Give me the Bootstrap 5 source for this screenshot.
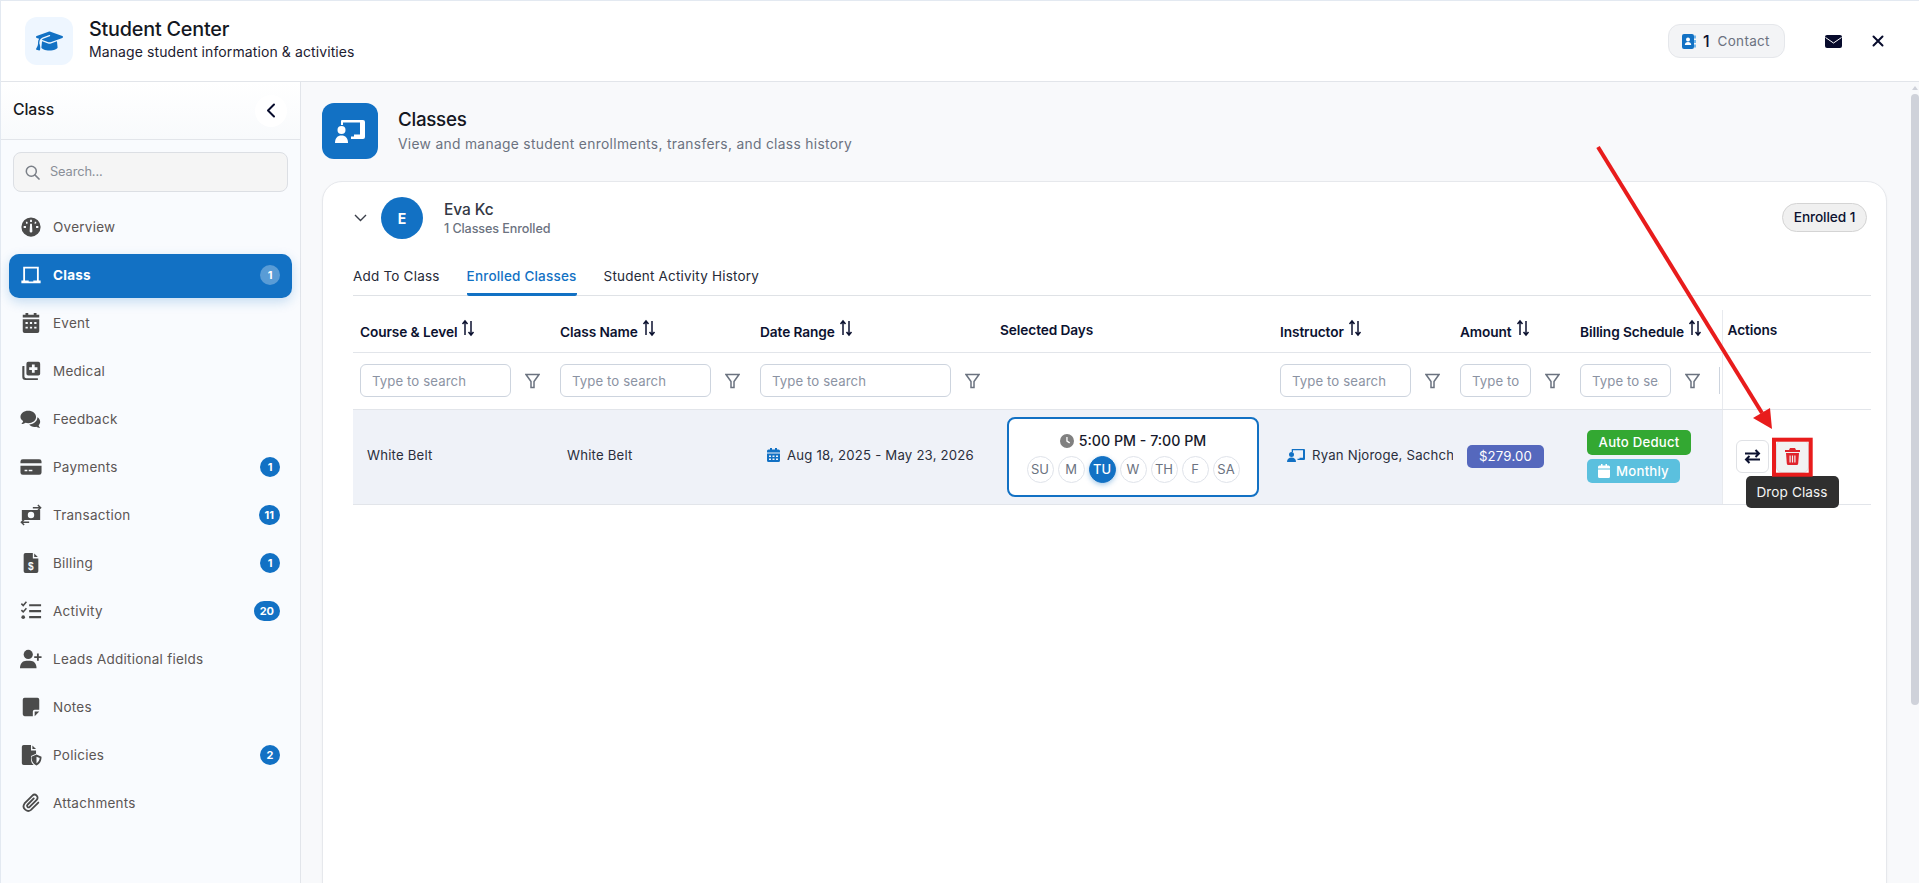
<!DOCTYPE html>
<html lang="en">
<head>
<meta charset="UTF-8">
<meta name="viewport" content="width=device-width, initial-scale=1.0">
<title>Student Center</title>
<link href="https://cdn.jsdelivr.net/npm/bootstrap@5.3.0/dist/css/bootstrap.min.css" rel="stylesheet">
<style>
:root { --brand: #1271c4; --ink: #0c1230; --line: #e2e5ea; }
html, body { height: 100%; }
body { font-family: Inter, "Noto Sans", sans-serif; color: var(--ink); overflow: hidden; background: #fff; letter-spacing: -.1px; }
.app-shell { height: 883px; border-top: 1px solid #e3e9f1; border-left: 1px solid #e3e9f1; position: relative; }
.top-bar { height: 81px; padding: 0 35px 0 24px; border-bottom: 1px solid var(--line); flex: none; }
.logo-box { width: 48px; height: 48px; border-radius: 12px; background: #eef6ff; }
.logo-box svg { width: 27px; height: 22px; fill: var(--brand); }
.title-block { margin-bottom: 4px; }
.app-title { font-size: 19.8px; font-weight: 500; line-height: 26px; color: #14171f; letter-spacing: -.2px; }
.app-sub { font-size: 14px; line-height: 20px; color: #1c2030; letter-spacing: .1px; }
.contact-pill { width: 117px; height: 34px; background: #f3f4f6; border: 1px solid #e5e7eb; border-radius: 12px; padding-left: 13px; margin-right: 40px; }
.contact-pill b { font-size: 16px; font-weight: 500; margin: 0 8px 0 7px; }
.contact-pill span { font-size: 13.5px; color: #6b7280; letter-spacing: .3px; }
.top-mail { width: 17px; height: 13px; margin-right: 30px; }
.top-close { width: 12px; height: 12px; }
.body-row { height: 801px; }
.side-bar { width: 300px; flex: none; background: #f9fbfe; border-right: 1px solid var(--line); }
.side-head { height: 58px; padding: 0 13px 0 12px; border-bottom: 1px solid var(--line); background: linear-gradient(#fff, #f8fafc); }
.side-head h2 { font-size: 15.8px; font-weight: 500; margin: 0; color: #171a22; }
.side-back { width: 32px; height: 32px; border-radius: 50%; background: #fff; }
.side-search { margin: 12px 12px 14px 12px; height: 40px; background: #f5f5f5; border: 1px solid #dcdfe4; border-radius: 8px; padding-left: 11px; gap: 10px; }
.side-search span { font-size: 12.8px; color: #8a8f98; }
.side-nav { padding: 0 8px; gap: 4px; }
.side-link { height: 44px; border-radius: 10px; padding: 0 12px 2px 0; color: #5c5655; font-size: 13.5px; letter-spacing: .25px; text-decoration: none; }
.side-link .ico { width: 44px; flex: none; text-align: center; }
.side-link svg { width: 26px; height: 22px; fill: #4b4b4b; vertical-align: middle; }
.side-link.on { background: var(--brand); color: #fff; font-weight: 700; box-shadow: 0 4px 12px rgba(18,113,196,.22); }
.side-link.on svg { fill: #fff; }
.count-dot { min-width: 20px; height: 20px; padding: 0 6px; border-radius: 10px; background: var(--brand); color: #fff; font-size: 11px; font-weight: 700; line-height: 20px; text-align: center; letter-spacing: 0; }
.on .count-dot { background: rgba(255,255,255,.3); }
.main-pane { background: #f8f9fb; min-width: 0; padding: 21px 24px 0 21px; overflow: hidden; }
.page-head { height: 56px; margin-bottom: 22px; gap: 20px; flex: none; }
.head-ico { width: 56px; height: 56px; background: var(--brand); border-radius: 12px; }
.head-ico svg { width: 32px; height: 26px; fill: #fff; }
.page-title { font-size: 18.8px; font-weight: 500; line-height: 26px; letter-spacing: -.3px; margin: 0; color: #14171f; }
.page-sub { font-size: 13.8px; color: #6b7280; line-height: 22px; letter-spacing: .32px; }
.class-card { border: 1px solid #e6e8ec; border-radius: 20px; background: #fff; padding: 15px 15px 0 30px; height: 760px; flex: none; box-shadow: 0 1px 3px rgba(0,0,0,.04); }
.person-row { height: 42px; margin-bottom: 20px; }
.person-chev { width: 13px; height: 8px; margin: 0 14px 0 1px; }
.person-avatar { width: 42px; height: 42px; border-radius: 50%; background: var(--brand); color: #fff; font-size: 14px; font-weight: 700; margin-right: 21px; }
.person-name { font-size: 15.5px; font-weight: 500; line-height: 22px; color: #333845; }
.person-sub { font-size: 12.6px; font-weight: 500; line-height: 16px; color: #6b7280; letter-spacing: -.1px; }
.enrolled-pill { width: 85px; height: 29px; background: #f0f0f0; border: 1px solid #d4d4d4; border-radius: 15px; font-size: 13.7px; font-weight: 500; margin: -2px 4px 0 0; }
.tab-row { border-bottom: 1px solid #dfe2e6; height: 37px; gap: 27px; }
.tab-link { font-size: 13.5px; height: 37px; line-height: 34px; color: #262a38; text-decoration: none; letter-spacing: .2px; }
.tab-link.on { color: var(--brand); font-weight: 500; border-bottom: 3px solid var(--brand); border-radius: 0 0 2px 2px; }
.class-table { table-layout: fixed; width: 1518px; margin: 14px 0 0; }
.class-table th, .class-table td { border-bottom: 1px solid var(--line); padding: 0 7px; vertical-align: middle; white-space: nowrap; overflow: hidden; }
.class-table thead tr:first-child th { height: 42px; font-size: 13.7px; font-weight: 600; color: var(--ink); }
.class-table thead tr:nth-child(2) th { height: 57px; font-weight: 400; }
.class-table tbody td { height: 95px; padding: 0 14px 1px; font-size: 13.2px; color: #2a2e3c; background: #eff2f8; letter-spacing: .2px; }
.class-table tbody td.days-cell { padding: 0 14px; }
.c1, .c2 { width: 200px; } .c3 { width: 240px; } .c4 { width: 280px; } .c5 { width: 180px; } .c6 { width: 120px; } .c7 { width: 149px; } .c8 { width: 149px; }
.class-table .act-cell { background: #fff; border-left: 1px solid #e8eaee; overflow: visible; padding-left: 5px; }
.class-table tbody .act-cell { padding-left: 13px; position: relative; }
.sort-ico { width: 16px; height: 18px; margin-left: 3px; vertical-align: 0; stroke: var(--ink); stroke-width: 1.5; fill: none; }
.filter-wrap { gap: 14px; }
.filter-box { height: 33px; min-height: 33px; border: 1px solid #cdd4de; border-radius: 6px; padding: 0 11px; font-size: 13.2px; color: #2a2e3c; background: #fff; letter-spacing: .1px; flex: none; }
.filter-box::placeholder { color: #8b93a3; opacity: 1; }
.w150 { width: 151px; } .w190 { width: 191px; } .w131 { width: 131px; } .w71 { width: 71px; } .w91 { width: 91px; }
.filter-ico { width: 15px; height: 16px; stroke: #6b7380; fill: none; stroke-width: 1.5; flex: none; }
.clip-edge { width: 2px; height: 27px; border-left: 1px solid #cdd4de; flex: none; margin-left: 5px; }
.date-ico { width: 13px; height: 14px; fill: var(--brand); margin: 0 7px 0 0; vertical-align: -2px; }
.days-box { width: 252px; height: 80px; background: #fff; border: 2px solid var(--brand); border-radius: 8px; }
.days-time { font-size: 14.2px; font-weight: 500; color: #171a2c; line-height: 20px; margin-bottom: 5px; letter-spacing: 0; }
.days-time svg { width: 14px; height: 14px; fill: #808080; margin-right: 5px; vertical-align: -2px; }
.day-dot { width: 27px; height: 27px; border: 1px solid #dfe3ea; border-radius: 50%; font-size: 13px; color: #6b7280; line-height: 25px; text-align: center; letter-spacing: 0; }
.day-dot.on { background: var(--brand); border-color: var(--brand); color: #fff; font-weight: 500; box-shadow: 0 2px 5px rgba(18,113,196,.35); }
.teach-ico { width: 18px; height: 14px; fill: var(--brand); margin-right: 7px; vertical-align: -2px; }
.amount-pill { display: inline-block; background: #5568bd; color: #fff; border-radius: 5px; font-size: 13.2px; font-weight: 400; width: 77px; height: 23px; line-height: 23px; text-align: center; }
.bill-pill { display: block; border-radius: 5px; color: #fff; font-size: 13.2px; font-weight: 500; height: 25px; line-height: 25px; text-align: center; }
.bill-auto { background: #33a832; width: 104px; margin-bottom: 4px; }
.bill-month { background: #5bc0de; width: 93px; height: 24px; line-height: 24px; }
.bill-month svg { width: 12px; height: 14px; fill: #fff; margin-right: 6px; vertical-align: -2px; }
.act-btn { width: 33px; height: 33px; border: 1px solid #dfe1e5; border-radius: 6px; background: #fff; padding: 0; }
.act-btn svg { width: 17px; height: 17px; }
.act-drop { background: #f2f2f2; margin-left: 7px; }
.drop-tip { position: absolute; left: 23px; top: 66px; width: 93px; height: 32px; background: #2f2f2f; color: #f4f4f4; font-size: 13.6px; line-height: 32px; text-align: center; border-radius: 5px; z-index: 3; letter-spacing: .1px; }
.scroll-rail { width: 8px; flex: none; background: #f8f9fb; position: relative; }
.scroll-rail i { position: absolute; left: 0; right: 0; top: 12px; height: 611px; background: #cfd2da; border-radius: 4px; }
.scroll-rail u { position: absolute; left: 1px; top: 4px; border: 3px solid transparent; border-bottom: 4px solid #cfd2da; border-top: 0; }
.note-layer { position: absolute; left: -1px; top: -1px; width: 1919px; height: 883px; pointer-events: none; z-index: 5; }
</style>
</head>
<body>
<div class="app-shell d-flex flex-column">
  <header class="top-bar d-flex align-items-center">
    <div class="logo-box d-flex align-items-center justify-content-center">
      <svg viewBox="0 0 640 512"><path d="M320 32c-8.100 0-16.100 1.400-23.700 4.100L15.800 137.400C6.300 140.900 0 149.900 0 160s6.300 19.100 15.800 22.600l57.900 20.900C57.300 229.300 48 259.800 48 291.900v28.100c0 28.400-10.800 57.700-22.300 80.800c-6.500 13-13.900 25.800-22.500 37.600C0 442.700-.9 448.300 .9 453.400s6 8.900 11.200 10.200l64 16c4.200 1.100 8.700 .3 12.400-2s6.300-6.100 7.100-10.400c8.600-42.800 4.300-81.200-2.100-108.700C90.300 344.300 86 329.800 80 316.500V291.900c0-30.200 10.200-58.700 27.900-81.500c12.900-15.500 29.600-28 49.200-35.700l157-61.700c8.200-3.200 17.500 .8 20.700 9s-.8 17.500-9 20.700l-157 61.700c-12.400 4.900-23.300 12.400-32.200 21.600l159.600 57.600c7.600 2.700 15.600 4.100 23.700 4.100s16.100-1.400 23.700-4.100L624.200 182.600c9.500-3.400 15.800-12.500 15.800-22.600s-6.300-19.100-15.800-22.600L343.700 36.100C336.100 33.400 328.100 32 320 32zM128 408c0 35.300 86 72 192 72s192-36.700 192-72L496.700 262.600 354.500 314c-11.100 4-22.800 6-34.500 6s-23.500-2-34.500-6L143.300 262.600 128 408z"/></svg>
    </div>
    <div class="ms-3 title-block">
      <div class="app-title">Student Center</div>
      <div class="app-sub">Manage student information &amp; activities</div>
    </div>
    <div class="contact-pill d-flex align-items-center ms-auto">
      <svg width="14" height="15" viewBox="0 0 14 15"><rect x="0" y="0" width="12" height="15" rx="2" fill="#1271c4"/><circle cx="6" cy="5.500" r="2" fill="#fff"/><path d="M2.800 11c0-2 1.400-3 3.200-3s3.200 1 3.200 3z" fill="#fff"/><path d="M13 1.500v3M13 6v3M13 10.500v3" stroke="#4aa3e8" stroke-width="1.500"/></svg>
      <b>1</b><span>Contact</span>
    </div>
    <svg class="top-mail" viewBox="0 0 17 13"><rect width="17" height="13" rx="2" fill="#070b2c"/><path d="M.5 2.500 8.500 8l8-5.500" fill="none" stroke="#fff" stroke-width="1"/></svg>
    <svg class="top-close" viewBox="0 0 12 12"><path d="M1.500 1.500l9 9M10.500 1.500l-9 9" stroke="#070b2c" stroke-width="2" stroke-linecap="round"/></svg>
  </header>
  <div class="body-row d-flex">
    <aside class="side-bar d-flex flex-column">
      <div class="side-head d-flex align-items-center justify-content-between">
        <h2>Class</h2>
        <div class="side-back d-flex align-items-center justify-content-center">
          <svg width="10" height="15" viewBox="0 0 10 15"><path d="M8 1.500 2 7.500l6 6" fill="none" stroke="#070b2c" stroke-width="2" stroke-linecap="round" stroke-linejoin="round"/></svg>
        </div>
      </div>
      <div class="side-search d-flex align-items-center">
        <svg width="15" height="15" viewBox="0 0 15 15"><circle cx="6.300" cy="6.300" r="5" fill="none" stroke="#7a7f87" stroke-width="1.500"/><path d="m10 10 4 4" stroke="#7a7f87" stroke-width="1.700" stroke-linecap="round"/></svg>
        <span>Search...</span>
      </div>
      <nav class="side-nav d-flex flex-column">
        <a class="side-link d-flex align-items-center" href="#"><span class="ico"><svg viewBox="0 0 24 24"><path fill-rule="evenodd" d="M12 1.500a10.500 10.500 0 1 0 0 21 10.500 10.500 0 0 0 0-21zM11 4h2v2.500h-2zM6.300 6.300h1.600l.7 1.600-1.700.7zM16.100 6.300h1.600v1.600l-1.700.7zM4 11h2.500v2H4zM17.500 11H20v2h-2.500zM11 8.500h2l.5 8a1.500 1.500 0 0 1-3 0z"/></svg></span>Overview</a>
        <a class="side-link on d-flex align-items-center" href="#"><span class="ico"><svg viewBox="0 0 24 24"><path fill-rule="evenodd" d="M3.500 3h17v15h2v3H1.500v-3h2zM5.500 5v13h4v1h5v-1h4V5z"/></svg></span>Class<span class="count-dot ms-auto">1</span></a>
        <a class="side-link d-flex align-items-center" href="#"><span class="ico"><svg viewBox="0 0 24 24"><path fill-rule="evenodd" d="M6 1h3v2h6V1h3v2h3v3H3V3h3zM3 8h18v13a2 2 0 0 1-2 2H5a2 2 0 0 1-2-2zM6 11v2h2.500v-2zM10.800 11v2h2.400v-2zM15.500 11v2H18v-2zM6 16v2h2.500v-2zM10.800 16v2h2.400v-2zM15.500 16v2H18v-2z"/></svg></span>Event</a>
        <a class="side-link d-flex align-items-center" href="#"><span class="ico"><svg viewBox="0 0 24 24"><path fill-rule="evenodd" d="M9 2h11a2 2 0 0 1 2 2v11a2 2 0 0 1-2 2H9a2 2 0 0 1-2-2V4a2 2 0 0 1 2-2zM13 5v3h-3v3h3v3h3v-3h3V8h-3V5z"/><path d="M3 6.500h1.800V18a2 2 0 0 0 2 2h12.700v1.800H6a3.500 3.500 0 0 1-3.500-3.500V7z"/></svg></span>Medical</a>
        <a class="side-link d-flex align-items-center" href="#"><span class="ico"><svg viewBox="0 0 24 24"><path d="M9 3c4.800 0 8.500 3 8.500 6.800S13.800 16.500 9 16.500c-1 0-2-.1-3-.4-1.200.9-2.800 1.400-4.500 1.400 1-1 1.700-2.100 2-3.300C1.700 13.100.5 11.500.5 9.800.5 6 4.200 3 9 3z"/><path d="M19 10c0 4-3.500 7.500-9 8 1.200 1.700 3.400 2.600 5.800 2.600.7 0 1.400-.1 2-.2 1.100.8 2.500 1.300 4.200 1.300-.8-.9-1.400-1.900-1.700-3 1.100-1 1.700-2.200 1.700-3.700 0-2.200-1.200-4-3-5z"/></svg></span>Feedback</a>
        <a class="side-link d-flex align-items-center" href="#"><span class="ico"><svg viewBox="0 0 24 24"><path fill-rule="evenodd" d="M3 3.500h18a2.500 2.500 0 0 1 2.500 2.500v2H.5V6A2.500 2.500 0 0 1 3 3.500zM.5 10.500h23V18a2.500 2.500 0 0 1-2.500 2.500H3A2.500 2.500 0 0 1 .5 18zM5 15v1.600h3V15zM9.500 15v1.600h4V15z"/></svg></span>Payments<span class="count-dot ms-auto">1</span></a>
        <a class="side-link d-flex align-items-center" href="#"><span class="ico"><svg viewBox="0 0 24 24"><path fill-rule="evenodd" d="M2 6.500h20v11H2zM12 8.500a3.500 3.500 0 1 0 0 7 3.500 3.500 0 0 0 0-7z"/><path d="M14 4h8.500M19.500 1l3 3-3 3M10 20H1.500M4.500 17l-3 3 3 3" fill="none" stroke="#4b4b4b" stroke-width="1.600"/></svg></span>Transaction<span class="count-dot ms-auto">11</span></a>
        <a class="side-link d-flex align-items-center" href="#"><span class="ico"><svg viewBox="0 0 24 24"><path d="M6 1h8v6h6v14a2 2 0 0 1-2 2H6a2 2 0 0 1-2-2V3a2 2 0 0 1 2-2zM15.500 1.500 19.500 5.500h-4z"/><text x="12" y="20" text-anchor="middle" font-size="11" font-weight="700" fill="#f9fbfe" font-family="Liberation Sans, sans-serif">$</text></svg></span>Billing<span class="count-dot ms-auto">1</span></a>
        <a class="side-link d-flex align-items-center" href="#"><span class="ico"><svg viewBox="0 0 24 24"><path d="M10 4.500h13v2.400H10zM10 11h13v2.400H10zM10 17.500h13v2.400H10z"/><path d="m1.500 4 2 2 3.500-4M1.500 11l2 2 3.500-4" fill="none" stroke="#4b4b4b" stroke-width="1.700"/><circle cx="3.500" cy="18.700" r="2"/></svg></span>Activity<span class="count-dot ms-auto">20</span></a>
        <a class="side-link d-flex align-items-center" href="#"><span class="ico"><svg viewBox="0 0 24 24"><circle cx="9" cy="7" r="5"/><path d="M0 22c0-5 3-8 7-8h4c4 0 7 3 7 8z"/><path d="M18.500 6h2v3h3v2h-3v3h-2v-3h-3V9h3z"/></svg></span>Leads Additional fields</a>
        <a class="side-link d-flex align-items-center" href="#"><span class="ico"><svg viewBox="0 0 24 24"><path fill-rule="evenodd" d="M5 2h14a2 2 0 0 1 2 2v11h-5a2 2 0 0 0-2 2v5H5a2 2 0 0 1-2-2V4a2 2 0 0 1 2-2zM16 17h5l-5 5z"/></svg></span>Notes</a>
        <a class="side-link d-flex align-items-center" href="#"><span class="ico"><svg viewBox="0 0 24 24"><path d="M4 1h8v6h5.500v3.500L12 13v3c0 3 1 5.500 3 7H4a2 2 0 0 1-2-2V3a2 2 0 0 1 2-2zM13.500 1.500l4 4h-4z"/><path fill-rule="evenodd" d="M18 11.500l5.500 2.300c0 4-1.300 7.800-5.500 9.700-4.200-1.900-5.500-5.700-5.500-9.700zM18 14v7c2-1.200 3.300-3.500 3.500-5.800z"/></svg></span>Policies<span class="count-dot ms-auto">2</span></a>
        <a class="side-link d-flex align-items-center" href="#"><span class="ico"><svg viewBox="0 0 24 24"><path d="M20 11.500 12 19.500a5 5 0 0 1-7-7l8.500-8.500a3.300 3.300 0 0 1 4.700 4.700L10.500 16.200a1.600 1.600 0 0 1-2.300-2.300L15 7" fill="none" stroke="#4b4b4b" stroke-width="2" stroke-linecap="round"/></svg></span>Attachments</a>
      </nav>
    </aside>
    <main class="main-pane flex-grow-1 d-flex flex-column">
      <div class="page-head d-flex align-items-center">
        <div class="head-ico d-flex align-items-center justify-content-center">
          <svg viewBox="0 0 32 26"><circle cx="7.500" cy="12" r="4"/><path d="M1 25c0-5 2.500-7.500 6.500-7.500 4 0 6.500 2.500 6.500 7.500z"/><path d="M9 2h21a2 2 0 0 1 2 2v15a2 2 0 0 1-2 2H18v-2.500h3v-2h6V4.500H10V7H8V3a1 1 0 0 1 1-1z" transform="translate(-1 0)"/></svg>
        </div>
        <div>
          <h1 class="page-title">Classes</h1>
          <div class="page-sub">View and manage student enrollments, transfers, and class history</div>
        </div>
      </div>
      <section class="class-card">
        <div class="person-row d-flex align-items-center">
          <svg class="person-chev" viewBox="0 0 13 8"><path d="m1 1 5.500 5.500L12 1" fill="none" stroke="#3a3f4a" stroke-width="1.400"/></svg>
          <div class="person-avatar d-flex align-items-center justify-content-center">E</div>
          <div>
            <div class="person-name">Eva Kc</div>
            <div class="person-sub">1 Classes Enrolled</div>
          </div>
          <div class="enrolled-pill d-flex align-items-center justify-content-center ms-auto">Enrolled 1</div>
        </div>
        <div class="tab-row d-flex">
          <a class="tab-link" href="#">Add To Class</a>
          <a class="tab-link on" href="#">Enrolled Classes</a>
          <a class="tab-link" href="#">Student Activity History</a>
        </div>
        <table class="class-table">
          <colgroup><col class="c1"><col class="c2"><col class="c3"><col class="c4"><col class="c5"><col class="c6"><col class="c7"><col class="c8"></colgroup>
          <thead>
            <tr>
              <th>Course &amp; Level<svg class="sort-ico" viewBox="0 0 16 18"><path d="M5 16V2M2.500 5 5 2l2.500 3M11 2v14M8.500 13l2.500 3 2.500-3"/></svg></th>
              <th>Class Name<svg class="sort-ico" viewBox="0 0 16 18"><path d="M5 16V2M2.500 5 5 2l2.500 3M11 2v14M8.500 13l2.500 3 2.500-3"/></svg></th>
              <th>Date Range<svg class="sort-ico" viewBox="0 0 16 18"><path d="M5 16V2M2.500 5 5 2l2.500 3M11 2v14M8.500 13l2.500 3 2.500-3"/></svg></th>
              <th>Selected Days</th>
              <th>Instructor<svg class="sort-ico" viewBox="0 0 16 18"><path d="M5 16V2M2.500 5 5 2l2.500 3M11 2v14M8.500 13l2.500 3 2.500-3"/></svg></th>
              <th>Amount<svg class="sort-ico" viewBox="0 0 16 18"><path d="M5 16V2M2.500 5 5 2l2.500 3M11 2v14M8.500 13l2.500 3 2.500-3"/></svg></th>
              <th>Billing Schedule<svg class="sort-ico" viewBox="0 0 16 18"><path d="M5 16V2M2.500 5 5 2l2.500 3M11 2v14M8.500 13l2.500 3 2.500-3"/></svg></th>
              <th class="act-cell">Actions</th>
            </tr>
            <tr>
              <th><div class="filter-wrap d-flex align-items-center"><input class="form-control filter-box w150" type="text" placeholder="Type to search"><svg class="filter-ico" viewBox="0 0 15 16"><path d="M1 1.500h13L9 8.500V14.500H6V8.500z"/></svg></div></th>
              <th><div class="filter-wrap d-flex align-items-center"><input class="form-control filter-box w150" type="text" placeholder="Type to search"><svg class="filter-ico" viewBox="0 0 15 16"><path d="M1 1.500h13L9 8.500V14.500H6V8.500z"/></svg></div></th>
              <th><div class="filter-wrap d-flex align-items-center"><input class="form-control filter-box w190" type="text" placeholder="Type to search"><svg class="filter-ico" viewBox="0 0 15 16"><path d="M1 1.500h13L9 8.500V14.500H6V8.500z"/></svg></div></th>
              <th></th>
              <th><div class="filter-wrap d-flex align-items-center"><input class="form-control filter-box w131" type="text" placeholder="Type to search"><svg class="filter-ico" viewBox="0 0 15 16"><path d="M1 1.500h13L9 8.500V14.500H6V8.500z"/></svg></div></th>
              <th><div class="filter-wrap d-flex align-items-center"><input class="form-control filter-box w71" type="text" placeholder="Type to search"><svg class="filter-ico" viewBox="0 0 15 16"><path d="M1 1.500h13L9 8.500V14.500H6V8.500z"/></svg></div></th>
              <th><div class="filter-wrap d-flex align-items-center"><input class="form-control filter-box w91" type="text" placeholder="Type to search"><svg class="filter-ico" viewBox="0 0 15 16"><path d="M1 1.500h13L9 8.500V14.500H6V8.500z"/></svg><span class="clip-edge"></span></div></th>
              <th class="act-cell"></th>
            </tr>
          </thead>
          <tbody>
            <tr>
              <td>White Belt</td>
              <td>White Belt</td>
              <td><svg class="date-ico" viewBox="0 0 13 14"><path fill-rule="evenodd" d="M3 0h2v1.500h3V0h2v1.500h1.500A1.500 1.500 0 0 1 13 3v1.500H0V3a1.500 1.500 0 0 1 1.500-1.500H3zM0 5.500h13v7A1.500 1.500 0 0 1 11.500 14h-10A1.500 1.500 0 0 1 0 12.500zM2 7.500V9h2V7.500zM5.500 7.500V9h2V7.500zM9 7.500V9h2V7.500zM2 10.500V12h2v-1.500zM5.500 10.500V12h2v-1.500zM9 10.500V12h2v-1.500z"/></svg>Aug 18, 2025 - May 23, 2026</td>
              <td class="days-cell">
                <div class="days-box d-flex flex-column align-items-center justify-content-center">
                  <div class="days-time"><svg viewBox="0 0 14 14"><path fill-rule="evenodd" d="M7 0a7 7 0 1 1 0 14A7 7 0 0 1 7 0zM6.300 3v4.400l3 2 .8-1.100-2.500-1.600V3z"/></svg>5:00 PM - 7:00 PM</div>
                  <div class="d-flex gap-1">
                    <div class="day-dot">SU</div><div class="day-dot">M</div><div class="day-dot on">TU</div><div class="day-dot">W</div><div class="day-dot">TH</div><div class="day-dot">F</div><div class="day-dot">SA</div>
                  </div>
                </div>
              </td>
              <td><svg class="teach-ico" viewBox="0 0 18 14"><circle cx="4.500" cy="6.500" r="2.500"/><path d="M0 14c0-3 1.800-4.500 4.500-4.500S9 11 9 14z"/><path d="M5 1h12a1 1 0 0 1 1 1v9a1 1 0 0 1-1 1h-6.500v-1.300h2v-1h3.500V2.300H6V4H4.700V1.300z"/></svg>Ryan Njoroge, Sachch</td>
              <td><span class="amount-pill">$279.00</span></td>
              <td><span class="bill-pill bill-auto">Auto Deduct</span><span class="bill-pill bill-month"><svg viewBox="0 0 12 14"><path d="M3 0h1.500v1.500h3V0H9v1.500h1.500A1.500 1.500 0 0 1 12 3v1.500H0V3a1.500 1.500 0 0 1 1.500-1.500H3zM0 5.500h12v7a1.500 1.500 0 0 1-1.500 1.500h-9A1.500 1.500 0 0 1 0 12.500z"/></svg>Monthly</span></td>
              <td class="act-cell">
                <div class="d-flex">
                  <button class="act-btn d-flex align-items-center justify-content-center" type="button"><svg viewBox="0 0 17 17"><path d="M1 5.500h14M11.500 2l3.500 3.500-3.500 3.500M16 11.500H2M5.500 8 2 11.500 5.500 15" fill="none" stroke="#0c1230" stroke-width="2"/></svg></button>
                  <button class="act-btn act-drop d-flex align-items-center justify-content-center" type="button"><svg viewBox="0 0 17 17"><path fill-rule="evenodd" fill="#e0242c" d="M6 0h5l1 2h4v2H1V2h4zM2 5h13l-.8 10.500A1.600 1.600 0 0 1 12.600 17H4.400a1.600 1.600 0 0 1-1.600-1.500zM5.500 7.500v7h1.200v-7zM7.900 7.500v7h1.200v-7zM10.300 7.500v7h1.200v-7z"/></svg></button>
                </div>
                <div class="drop-tip">Drop Class</div>
              </td>
            </tr>
          </tbody>
        </table>
      </section>
    </main>
    <div class="scroll-rail"><u></u><i></i></div>
  </div>
  <svg class="note-layer" viewBox="0 0 1919 883">
    <line x1="1598" y1="147" x2="1762" y2="413" stroke="#e81c1c" stroke-width="4"/>
    <polygon points="1772,429 1753,418 1770,408" fill="#e81c1c"/>
    <rect x="1774" y="439.700" width="36.700" height="35" fill="none" stroke="#e81c1c" stroke-width="4"/>
  </svg>
</div>
</body>
</html>
